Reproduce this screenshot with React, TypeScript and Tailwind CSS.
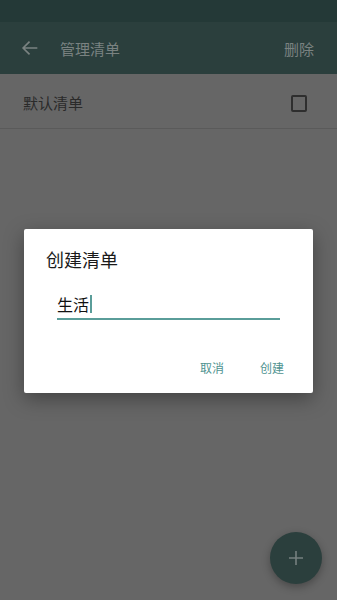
import React from 'react';

const font = { fontFamily: '"Noto Sans CJK SC", "Noto Sans", sans-serif' };

export default function App() {
  return (
    <div className="relative w-[337px] h-[600px] overflow-hidden bg-[#666666]" style={font}>
      {/* status bar */}
      <div className="h-[22px] bg-[#243937]" />

      {/* toolbar */}
      <div className="h-[52px] bg-[#2b3f3d] flex items-center pl-[19px] pr-[20px] text-[#7a8281]">
        <svg width="22" height="22" viewBox="0 0 24 24" fill="none" stroke="currentColor" strokeWidth="1.8">
          <path d="M20 12H4.5M11.5 5l-7 7 7 7" />
        </svg>
        <span className="ml-[19px] text-[15px] leading-none">管理清单</span>
        <span className="ml-auto mr-[3px] text-[15px] leading-none">删除</span>
      </div>

      {/* list */}
      <div className="h-[55px] flex items-center pt-[4px] pl-[23px] pr-[30px] border-b border-[#5a5a5a]">
        <span className="text-[15px] text-[#2a2a2a]">默认清单</span>
        <div className="ml-auto w-[16px] h-[17px] border-2 border-[#2e2e2e] rounded-[2px]" />
      </div>

      {/* dialog */}
      <div className="absolute left-[24px] top-[229px] w-[289px] h-[164px] bg-white rounded-[2px] shadow-[0_6px_20px_rgba(0,0,0,0.35)]">
        <div className="pl-[22px] pt-[18px] text-[18px] leading-[24px] text-[#1a1a1a]">创建清单</div>
        <div className="mx-[33px] mt-[21px] border-b-2 border-[#5a9d99] pb-[2px] flex items-center h-[28px]">
          <span className="text-[16px] leading-none text-[#111]">生活</span>
          <span className="ml-[1px] w-[2px] h-[18px] bg-[#5a9d99]" />
        </div>
        <div className="flex justify-end items-center gap-[36px] pr-[29px] mt-[39px] text-[12px] text-[#4f9390]">
          <span>取消</span>
          <span>创建</span>
        </div>
      </div>

      {/* fab */}
      <div className="absolute left-[270px] top-[532px] w-[52px] h-[52px] rounded-full bg-[#2b3f3d] shadow-[0_3px_8px_rgba(0,0,0,0.3)] flex items-center justify-center">
        <svg width="14" height="14" viewBox="0 0 14 14" stroke="#76807f" strokeWidth="1.6">
          <path d="M7 0v14M0 7h14" />
        </svg>
      </div>
    </div>
  );
}
